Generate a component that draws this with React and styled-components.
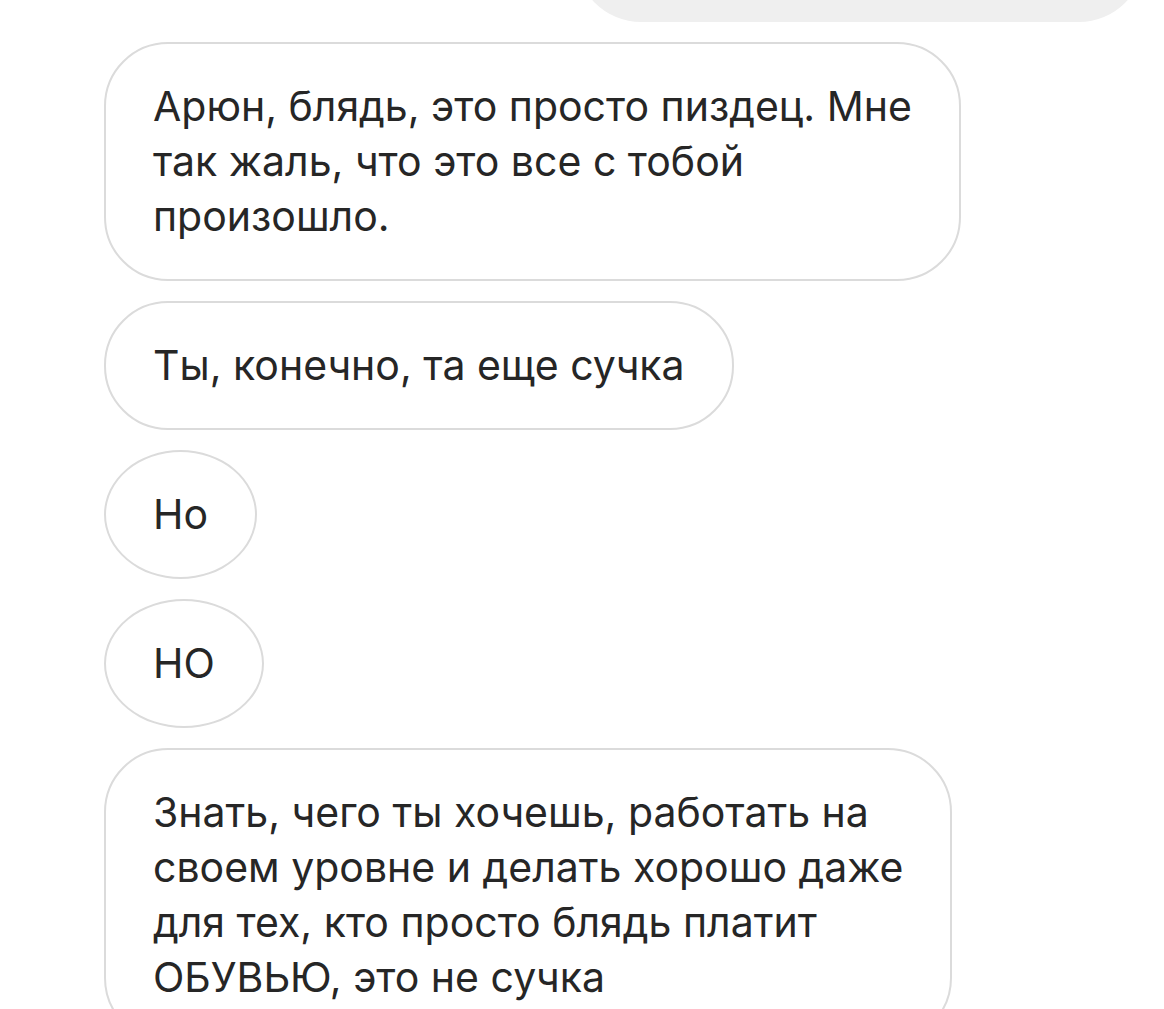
import React from "react";
import styled, { createGlobalStyle } from "styled-components";

const GlobalStyle = createGlobalStyle`
  html, body {
    margin: 0;
    padding: 0;
    background: #ffffff;
    overflow: hidden;
  }
`;

const Thread = styled.div`
  display: flex;
  flex-direction: column;
  align-items: flex-start;
  gap: 20px;
  width: 1164px;
  height: 1009px;
  padding: 0 20px 0 104px;
  box-sizing: border-box;
  overflow: hidden;
  font-family: Inter, "Noto Sans", sans-serif;
  color: #262626;
`;

const OwnBubble = styled.div`
  align-self: flex-end;
  width: 568px;
  height: 130px;
  margin-top: -108px;
  border-radius: 66px;
  background: #efefef;
  flex-shrink: 0;
`;

const Bubble = styled.div`
  flex-shrink: 0;
  border: 2px solid #dbdbdb;
  border-radius: ${(p) => (p.$round ? "50%" : "64px")};
  padding: 35px 47px;
  font-size: 41px;
  line-height: 55px;
  white-space: nowrap;
  background: #ffffff;
`;

const messages = [
  {
    id: 1,
    lines: [
      "Арюн, блядь, это просто пиздец. Мне",
      "так жаль, что это все с тобой",
      "произошло.",
    ],
  },
  { id: 2, lines: ["Ты, конечно, та еще сучка"] },
  { id: 3, lines: ["Но"], round: true },
  { id: 4, lines: ["НО"], round: true },
  {
    id: 5,
    lines: [
      "Знать, чего ты хочешь, работать на",
      "своем уровне и делать хорошо даже",
      "для тех, кто просто блядь платит",
      "ОБУВЬЮ, это не сучка",
    ],
  },
];

const App = () => {
  return (
    <>
      <GlobalStyle />
      <Thread>
        <OwnBubble />
        {messages.map((m) => (
          <Bubble key={m.id} $round={m.round}>
            {m.lines.map((line, i) => (
              <React.Fragment key={i}>
                {i > 0 && <br />}
                {line}
              </React.Fragment>
            ))}
          </Bubble>
        ))}
      </Thread>
    </>
  );
};

export default App;
